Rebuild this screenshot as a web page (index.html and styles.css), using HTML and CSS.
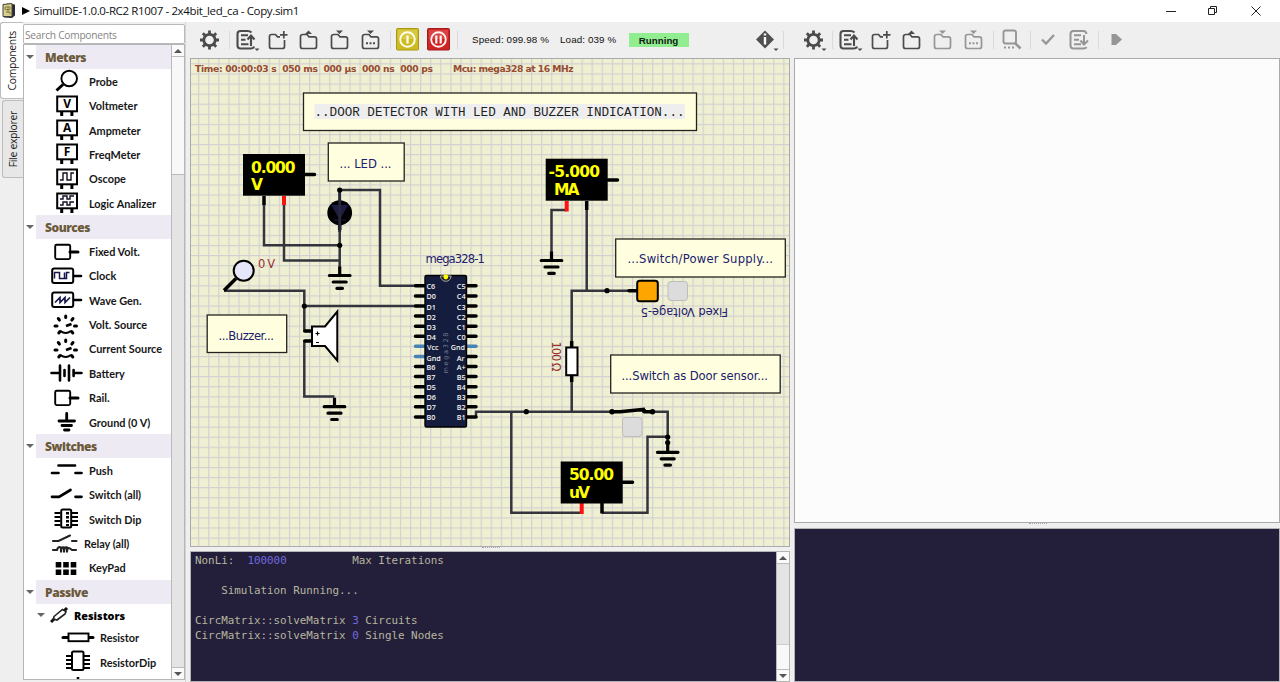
FILE: index.html
```html
<!DOCTYPE html>
<html lang="en">
<head>
<meta charset="utf-8">
<title>SimulIDE</title>
<link rel="stylesheet" href="styles.css">
</head>
<body>
<svg class="defs" width="0" height="0">
  <defs>
    <g id="gear"><circle cx="15.5" cy="18" r="5.7" fill="none" stroke="currentColor" stroke-width="2.8"/><path d="M15.5 8.5v4M15.5 23.5v4M6 18h4M21 18h4M8.8 11.3l2.8 2.8M19.4 21.9l2.8 2.8M8.8 24.7l2.8-2.8M19.4 14.1l2.8-2.8" stroke="currentColor" stroke-width="2.8"/></g>
    <path id="drop" d="M23.5 26.5h5l-2.5 2.6z" fill="currentColor"/>
    <g id="list-up"><path d="M20.5 10.5Q19 9 16.5 9H9.5Q6.5 9 6.5 12V23.500Q6.5 26.5 9.5 26.5H19.5Q22.5 26.5 23 24.5M10 13.200h7M10 17.700h4.500M10 22.200h7.500M20 24V14M16.500 17.500L20 13.500L23.500 17.500" fill="none" stroke="currentColor" stroke-width="2.100"/></g>
    <g id="list-down"><path d="M22.500 12Q22 9 19.500 9H9.500Q6.500 9 6.500 12V23.500Q6.500 26.500 9.500 26.500H19.500Q22 26.500 22.500 25M10 13.200h7M10 17.700h5M10 22.200h7M20 13V22M16.500 18.500L20 22.500L24 18.500" fill="none" stroke="currentColor" stroke-width="2"/></g>
    <path id="folder" d="M10 12.500H14L16 14.800H21.500Q23.500 14.800 23.500 16.800V24.500Q23.500 26.500 21.500 26.500H9.500Q7.500 26.500 7.500 24.500V14.500Q7.500 12.500 10 12.500Z" fill="none" stroke="currentColor" stroke-width="1.700"/>
    <path id="folder-plus" d="M18 14.800H15.500L13.500 12.500H9.500Q7.500 12.500 7.500 14.500V24.500Q7.500 26.500 9.500 26.500H20.500Q22.500 26.500 22.500 24.500V18M21.800 9v7.500M18 12.800h7.500" fill="none" stroke="currentColor" stroke-width="1.700"/>
    <path id="up" d="M12 12L15.500 8.500L19 12Z" fill="currentColor"/>
    <path id="down" d="M12 8.500h7L15.500 12Z" fill="currentColor"/>
    <path id="dots" d="M11 21.200h2M14.500 21.200h2M18 21.200h2" stroke="currentColor" stroke-width="2"/>
    <g id="meter"><rect x="7.200" y="2.500" width="19.800" height="14.800" fill="none" stroke="#000" stroke-width="2"/><path d="M11.700 17v5M21.900 17v5" stroke="#000" stroke-width="3"/></g>
    <g id="source"><rect x="5.200" y="4.800" width="15" height="14.300" rx="1.500" fill="none" stroke="#000" stroke-width="1.900"/><path d="M20 12h8" stroke="#000" stroke-width="3" stroke-linecap="round"/></g>
    <g id="wave-box"><rect x="2.200" y="4.500" width="21" height="14.500" rx="2" fill="none" stroke="#000" stroke-width="2"/><path d="M24 12h7" stroke="#000" stroke-width="2.600" stroke-linecap="round"/></g>
    <g id="dial" stroke="#000" fill="none"><path d="M15.700 3v1.500M8.300 5.500l1.200 1.600M23 5.500l-1.200 1.600M5 13h2M24.500 13h2M8.800 20l1.200-1.500M22.800 20l-1.200-1.500" stroke-width="3" stroke-linecap="round"/><path d="M10.500 18Q15.500 22 21 18" stroke-width="1.900"/><path d="M16 13l5.500-2" stroke-width="2.800"/></g>
    <g id="earth" stroke="#000" stroke-linecap="round" stroke-width="3.200"><path d="M0-9V0" stroke-linecap="butt"/><path d="M-10.300 0H10.300M-6.500 6.500H6.500M-2.800 12.800H2.800"/></g>
  </defs>
</svg>

<header class="titlebar">
  <svg class="app-icon" width="16" height="18" viewBox="0 0 16 18"><path d="M5 1.500l8 1v11l-3 2.500-8-.5z" fill="#29283c"/><path d="M1 2.500l9-1v13H1z" fill="#d8cf91" stroke="#44412e"/><path d="M3 5h5v2.500H3zM4 10h4v2.500M6 4v7" fill="none" stroke="#847d45"/></svg>
  <span class="marker"></span>
  <span class="caption">SimulIDE-1.0.0-RC2 R1007 - 2x4bit_led_ca - Copy.sim1</span>
  <svg class="window-controls" width="110" height="20" viewBox="0 0 110 20" fill="none" stroke="#222"><path d="M8 10.500h10M50.500 7.500h6v6h-6zM52.500 7.500v-2h6v6h-2M93.500 5.500l9 9M102.500 5.500l-9 9"/></svg>
</header>

<div class="workspace">
  <nav class="tabs">
    <div class="tab tab-active"><span>Components</span></div>
    <div class="tab tab-files"><span>File explorer</span></div>
  </nav>

  <aside class="sidebar">
    <div class="search">Search Components</div>
    <div class="tree-frame">
      <div class="tree">
        <div class="group"><i class="arrow"></i><b>Meters</b></div>
        <div class="item"><svg class="ico" viewBox="0 0 34 24"><circle cx="19.200" cy="9.500" r="7.800" fill="none" stroke="#000" stroke-width="1.900"/><path d="M13 15.500L6.500 21.500" stroke="#000" stroke-width="3"/></svg>Probe</div>
        <div class="item"><svg class="ico" viewBox="0 0 34 24"><use href="#meter"/><text x="17.100" y="14" class="meter-letter">V</text></svg>Voltmeter</div>
        <div class="item"><svg class="ico" viewBox="0 0 34 24"><use href="#meter"/><text x="17.100" y="14" class="meter-letter">A</text></svg>Ampmeter</div>
        <div class="item"><svg class="ico" viewBox="0 0 34 24"><use href="#meter"/><text x="17.100" y="14" class="meter-letter">F</text></svg>FreqMeter</div>
        <div class="item"><svg class="ico" viewBox="0 0 34 24"><use href="#meter"/><path d="M10 13h3V6h4v7h4V6h3" fill="none" stroke="#112" stroke-width="1.400"/></svg>Oscope</div>
        <div class="item"><svg class="ico" viewBox="0 0 34 24"><use href="#meter"/><path d="M10 8h3V5h4v3h3V5h4M10 14h3v-3h4v3h3v-3h4" fill="none" stroke="#112" stroke-width="1.400"/></svg>Logic Analizer</div>

        <div class="group"><i class="arrow"></i><b>Sources</b></div>
        <div class="item"><svg class="ico" viewBox="0 0 34 24"><use href="#source"/></svg>Fixed Volt.</div>
        <div class="item"><svg class="ico" viewBox="0 0 34 24"><use href="#wave-box"/><path d="M4.500 14.500V8.500h5v6h5v-6M12.500 14.500h4v-6h3" fill="none" stroke="#16164a" stroke-width="1.500"/></svg>Clock</div>
        <div class="item"><svg class="ico" viewBox="0 0 34 24"><use href="#wave-box"/><path d="M5 14.500l5-5v5l5-5v5l5-5" fill="none" stroke="#16164a" stroke-width="1.600"/></svg>Wave Gen.</div>
        <div class="item"><svg class="ico" viewBox="0 0 34 24"><use href="#dial"/></svg>Volt. Source</div>
        <div class="item"><svg class="ico" viewBox="0 0 34 24"><use href="#dial"/></svg>Current Source</div>
        <div class="item"><svg class="ico" viewBox="0 0 34 24"><path d="M1.500 12H9M24.500 12h7M10 4.500v15M14.500 9v6M19 4.500v15M23.600 9v6" fill="none" stroke="#000" stroke-width="2.600" stroke-linecap="round"/></svg>Battery</div>
        <div class="item"><svg class="ico" viewBox="0 0 34 24"><use href="#source"/></svg>Rail.</div>
        <div class="item"><svg class="ico" viewBox="0 0 34 24"><path d="M16.700 3.500v7M9 11h15.500M12 15.500h9.500M14.500 20h4.500" stroke="#000" stroke-width="2.800" stroke-linecap="round"/></svg>Ground (0 V)</div>

        <div class="group"><i class="arrow"></i><b>Switches</b></div>
        <div class="item"><svg class="ico" viewBox="0 0 34 24"><path d="M8.500 6.500h16.500M2 14h6.500M25.500 14h6" stroke="#000" stroke-width="2.700" stroke-linecap="round"/></svg>Push</div>
        <div class="item"><svg class="ico" viewBox="0 0 34 24"><path d="M2 13.800h7L20.500 7M25.500 13.800h6" fill="none" stroke="#000" stroke-width="2.700" stroke-linecap="round"/></svg>Switch (all)</div>
        <div class="item"><svg class="ico" viewBox="0 0 34 24"><path d="M4.500 6h6M4.500 10h6M4.500 14h6M4.500 18h6M22 6h6M22 10h6M22 14h6M22 18h6" stroke="#000" stroke-width="2"/><rect x="11.200" y="2.500" width="10" height="18" rx="1.500" fill="#fff" stroke="#000" stroke-width="2"/><path d="M17.500 5v14" stroke="#000" stroke-width="3" stroke-dasharray="2.500 1.500"/></svg>Switch Dip</div>
        <div class="item item-relay"><svg class="ico" viewBox="0 0 34 24"><path d="M3 9h5.500L20 3.500M22 9h4.500M3 18h4q1-4 4-2.500v5q0-6 3-5v5q0-6 3-5v5q0-6 3-4l2 1.500h4" fill="none" stroke="#222" stroke-width="2.100" stroke-linecap="round"/></svg>Relay (all)</div>
        <div class="item"><svg class="ico" viewBox="0 0 34 24"><path d="M5.700 6h5.600v5.600H5.700zM13.200 6h5.600v5.600h-5.600zM20.700 6h5.600v5.600h-5.600zM5.700 13.400h5.600V19H5.700zM13.200 13.400h5.600V19h-5.600zM20.700 13.400h5.600V19h-5.600z"/></svg>KeyPad</div>

        <div class="group"><i class="arrow"></i><b>Passive</b></div>
        <div class="subgroup"><i class="arrow"></i><svg width="19" height="16" viewBox="0 0 19 16"><path d="M1 15l4-4M14 4l3-3" stroke="#111" stroke-width="3"/><path d="M4 9.500L12.500 2.500L16 4.500L15 7L7 13L3.500 12Z" fill="#fff" stroke="#222" stroke-width="1.600"/></svg><b>Resistors</b></div>
        <div class="item item-nested"><svg class="ico" viewBox="0 0 34 24"><path d="M2 11.500h30" stroke="#000" stroke-width="3" stroke-linecap="round"/><rect x="7.500" y="7.500" width="20" height="7.700" fill="#fff" stroke="#000" stroke-width="1.900"/></svg>Resistor</div>
        <div class="item item-nested"><svg class="ico" viewBox="0 0 34 24"><path d="M5 6h24M5 10h24M5 14h24M5 18h24" stroke="#000" stroke-width="2"/><rect x="11" y="1.500" width="11.500" height="18.500" rx="1.500" fill="#fff" stroke="#000" stroke-width="2"/></svg>ResistorDip</div>
        <div class="item item-nested"><svg class="ico" viewBox="0 0 34 24"><path d="M17 2v8" stroke="#000" stroke-width="2.500"/></svg></div>
      </div>
      <div class="scrollbar"><i class="btn"><i class="tri-up"></i></i><i class="thumb tree-thumb"></i><i class="groove"></i><i class="btn"><i class="tri-down"></i></i></div>
    </div>
  </aside>
  <div class="vsplit"></div>

  <main class="simulator">
    <div class="toolbar">
      <svg class="tool" viewBox="0 0 31 36"><use href="#gear"/></svg>
      <i class="sep sep-a"></i>
      <svg class="tool" viewBox="0 0 31 36"><use href="#list-up"/><use href="#drop"/></svg>
      <svg class="tool" viewBox="0 0 31 36"><use href="#folder-plus"/></svg>
      <svg class="tool" viewBox="0 0 31 36"><use href="#folder"/><use href="#up"/></svg>
      <svg class="tool" viewBox="0 0 31 36"><use href="#folder"/><use href="#down"/></svg>
      <svg class="tool" viewBox="0 0 31 36"><use href="#folder"/><use href="#down"/><use href="#dots"/></svg>
      <i class="sep sep-a"></i>
      <svg class="tool" viewBox="0 0 31 36"><rect x="4.500" y="6.500" width="22" height="21.500" rx="1" fill="#cdbb24" stroke="#aa9914"/><rect x="6" y="8" width="19" height="9" fill="#e0d25a" opacity=".6"/><circle cx="15.500" cy="17.500" r="7.300" fill="none" stroke="#fffef0" stroke-width="1.900"/><path d="M15.500 13.500v8" stroke="#fffef0" stroke-width="2.200"/></svg>
      <svg class="tool" viewBox="0 0 31 36"><rect x="4.500" y="6.500" width="22" height="21.500" rx="1" fill="#cf2424" stroke="#a31d1d"/><rect x="6" y="8" width="19" height="9" fill="#e86060" opacity=".5"/><circle cx="15.500" cy="17.500" r="7.300" fill="none" stroke="#fff4f4" stroke-width="1.900"/><path d="M13.300 13.500v8M17.700 13.500v8" stroke="#fff4f4" stroke-width="2.200"/></svg>
      <i class="sep sep-b"></i>
      <span class="stat stat-speed">Speed: 099.98 %</span>
      <span class="stat stat-load">Load: 039 %</span>
      <span class="running">Running</span>
      <svg class="tool info" viewBox="0 0 31 36"><path d="M15 8.500l9 9-9 9-9-9z" fill="#505050"/><path d="M15 15v7.500M15 11.500v2" stroke="#fff" stroke-width="2.400"/><use href="#drop"/></svg>
      <i class="sep"></i>
    </div>

    <div class="canvas">
      <svg width="598" height="487" viewBox="191 59 598 487">
        <defs>
          <pattern id="grid" patternUnits="userSpaceOnUse" x="198.100" y="83.500" width="10.090" height="10.090"><path d="M0 .5H10.090M.5 0V10.090" stroke="#d2d0d1" stroke-width="1.300"/></pattern>
        </defs>
        <rect x="191" y="59" width="598" height="487" fill="#efefd1"/>
        <rect x="191" y="59" width="598" height="487" fill="url(#grid)"/>

        <g class="status">
          <text x="195" y="72" textLength="238" xml:space="preserve">Time: 00:00:03 s  050 ms  000 µs  000 ns  000 ps</text>
          <text x="453" y="72" textLength="120.500">Mcu: mega328 at 16 MHz</text>
        </g>

        <g class="note">
          <rect x="303.500" y="93" width="393" height="37.500"/>
          <rect x="328.300" y="143" width="75.900" height="38"/>
          <rect x="207.200" y="315" width="79.500" height="37.500"/>
          <rect x="615.700" y="239" width="169.600" height="38"/>
          <rect x="610.700" y="355" width="169.500" height="38"/>
        </g>
        <rect x="314.500" y="104" width="370.500" height="15" fill="#eee"/>
        <text class="headline" x="314.500" y="115.500" textLength="370">..DOOR DETECTOR WITH LED AND BUZZER INDICATION...</text>
        <g class="label">
          <text x="339.500" y="167.700" textLength="52">... LED ...</text>
          <text x="218.500" y="339.500" textLength="55.500">...Buzzer...</text>
          <text x="627.500" y="263.300" textLength="145.500">...Switch/Power Supply...</text>
          <text x="621.500" y="379.500" textLength="146.500">...Switch as Door sensor...</text>
          <text x="425.500" y="263.300" textLength="59.500">mega328-1</text>
          <text transform="translate(728 307.500) rotate(180)" textLength="87.500">Fixed Voltage-5</text>
        </g>

        <g class="wire">
          <path d="M264 203V245.300H339.700M284 203V260.500H339.700M339.700 190V268M339.700 190H380V285.800H418"/>
          <path d="M224 290.700H304.300V331H308M304.300 306H418M308 341H304.300V396.500H334.500"/>
          <path d="M566.700 210H551.500V252M586.700 205V290.700M630 290.700H571.700V411.700M476 418V411.700H614M650 411.700H667.700V441M667.700 436.700H647.500V512.700H602M511.300 411.700V512.700H581.700"/>
        </g>

        <g class="pin">
          <path d="M264 196V205M339.700 220V230M586.700 201V210M602 503V513.500M571.700 341V347M571.700 375V382"/>
          <path stroke-linecap="round" d="M305 174.500H314.500M608 180H617.500M623 482.300H632.500M305 331H311M305 341H311M629 290.700H637"/>
        </g>
        <path d="M284 196V205M566.700 201V211.500M581.700 503V514" stroke="#f11" stroke-width="4"/>

        <g class="display-box">
          <rect x="243" y="154" width="62" height="41.700"/>
          <rect x="545.700" y="158.700" width="62" height="42"/>
          <rect x="560.700" y="461.500" width="62" height="42"/>
        </g>
        <g class="display">
          <text x="251" y="172.500" textLength="44.500">0.000</text><text x="251" y="190.300">V</text>
          <text x="548.500" y="177" textLength="51.500">-5.000</text><text x="554" y="195" textLength="25.500">MA</text>
          <text x="569" y="479.800" textLength="45">50.00</text><text x="569" y="497.500" textLength="21">uV</text>
        </g>

        <circle cx="339.700" cy="212.700" r="12.400"/>
        <path d="M332 205.500H347.400L339.700 219ZM334 220H346" fill="#1c1c46" stroke="#1c1c46"/>
        <path d="M339.700 190V232" stroke="#272738" stroke-width="2.800"/>

        <circle cx="243.700" cy="270.700" r="10" fill="#e6e6fa" stroke="#000" stroke-width="2"/>
        <path d="M236 278.500L224 290.500" stroke="#000" stroke-width="3.500"/>

        <path d="M312 326.500H325L337.300 311.500V360.500L325 346H312Z" fill="#fff" stroke="#000" stroke-width="2"/>
        <path d="M315.500 333.500h4M317.500 331.500v4M316 342.500h3" stroke="#000" stroke-width="1.200"/>

        <use href="#earth" x="339.700" y="275.500"/>
        <use href="#earth" x="334.500" y="406.700"/>
        <use href="#earth" x="551.500" y="260.500"/>
        <use href="#earth" x="667.700" y="452.300"/>

        <path class="legs" d="M415.500 285.800h9M415.500 295.900h9M415.500 306h9M415.500 316.100h9M415.500 326.200h9M415.500 336.200h9M415.500 366.500h9M415.500 376.600h9M415.500 386.700h9M415.500 396.800h9M415.500 406.800h9M415.500 416.900h9M467 285.800h9M467 295.900h9M467 306h9M467 316.100h9M467 326.200h9M467 336.200h9M467 356.400h9M467 366.500h9M467 376.600h9M467 386.700h9M467 396.800h9M467 406.800h9M467 416.900h9"/>
        <path class="legs legs-power" d="M415.500 346.300h9M415.500 356.400h9M467 346.300h9"/>
        <rect x="425" y="275.500" width="41.500" height="151.500" rx="1.500" fill="#151d3f" stroke="#000" stroke-width="1.400"/>
        <path d="M440.500 276a5.300 5.300 0 0 0 10.600 0z" fill="#222" stroke="#aaa" stroke-width="1"/>
        <circle cx="445.800" cy="277" r="2.400" fill="#ff0"/>
        <g class="chip-text">
          <text x="426.500" y="289.300">C6</text><text x="426.500" y="299.400">D0</text><text x="426.500" y="309.500">D1</text><text x="426.500" y="319.500">D2</text><text x="426.500" y="329.600">D3</text><text x="426.500" y="339.700">D4</text><text x="427" y="350.300">Vcc</text><text x="426.500" y="360.600">Gnd</text><text x="426.500" y="370">B6</text><text x="426.500" y="380.100">B7</text><text x="426.500" y="390.200">D5</text><text x="426.500" y="400.300">D6</text><text x="426.500" y="410.300">D7</text><text x="426.500" y="420.400">B0</text>
        </g>
        <g class="chip-text chip-right">
          <text x="465.500" y="289.300">C5</text><text x="465.500" y="299.400">C4</text><text x="465.500" y="309.500">C3</text><text x="465.500" y="319.500">C2</text><text x="465.500" y="329.600">C1</text><text x="465.500" y="339.700">C0</text><text x="465" y="350.300">Gnd</text><text x="464.500" y="360.600">Ar</text><text x="465.500" y="370">A+</text><text x="465.500" y="380.100">B5</text><text x="465.500" y="390.200">B4</text><text x="465.500" y="400.300">B3</text><text x="465.500" y="410.300">B2</text><text x="465.500" y="420.400">B1</text>
        </g>
        <text class="chip-name" transform="translate(448 373.500) rotate(-90)" textLength="41">mega328</text>

        <rect x="566.200" y="347.500" width="11.300" height="27.700" fill="#fff" stroke="#000" stroke-width="2"/>
        <g class="value">
          <text x="258" y="268" textLength="17">0 V</text>
          <text transform="translate(552 341.500) rotate(90)" textLength="30">100 Ω</text>
        </g>

        <rect x="637.200" y="280.800" width="20.600" height="20.400" rx="2.500" fill="#ffa500" stroke="#000" stroke-width="2"/>
        <g fill="#dcdcdc" stroke="#bdbdbd"><rect x="668" y="281.500" width="19.500" height="19" rx="3"/><rect x="622.500" y="417.500" width="19.500" height="19" rx="3"/></g>
        <path d="M612 411.700H620L645 409.200M644 409V411.700H652" fill="none" stroke="#000" stroke-width="3.600" stroke-linejoin="round"/>
        <g><circle cx="339.700" cy="190" r="2.600"/><circle cx="339.700" cy="245.300" r="2.600"/><circle cx="304.300" cy="306" r="2.600"/><circle cx="607" cy="290.700" r="2.600"/><circle cx="526.300" cy="411.700" r="2.600"/><circle cx="612" cy="411.700" r="2.700"/><circle cx="652.500" cy="411.700" r="2.700"/><circle cx="667.700" cy="437" r="2.600"/><circle cx="667.700" cy="442.500" r="2.600"/></g>
      </svg>
    </div>
    <div class="hsplit"></div>
    <div class="console">
      <div class="log">
        <div class="line"><span>NonLi:  </span><em>100000</em><span>          Max Iterations</span></div>
        <div class="line"></div>
        <div class="line"><span>    Simulation Running...</span></div>
        <div class="line"></div>
        <div class="line"><span>CircMatrix::solveMatrix </span><em>3</em><span> Circuits</span></div>
        <div class="line"><span>CircMatrix::solveMatrix </span><em>0</em><span> Single Nodes</span></div>
      </div>
      <div class="scrollbar"><i class="btn"><i class="tri-up"></i></i><i class="groove"></i><i class="thumb console-thumb"></i><i class="btn"><i class="tri-down"></i></i></div>
    </div>
  </main>

  <section class="editor">
    <div class="toolbar">
      <svg class="tool" viewBox="0 0 31 36"><use href="#gear"/><use href="#drop"/></svg>
      <i class="sep sep-b"></i>
      <svg class="tool" viewBox="0 0 31 36"><use href="#list-up"/><use href="#drop"/></svg>
      <svg class="tool" viewBox="0 0 31 36"><use href="#folder-plus"/></svg>
      <svg class="tool" viewBox="0 0 31 36"><use href="#folder"/><use href="#up"/></svg>
      <svg class="tool disabled" viewBox="0 0 31 36"><use href="#folder"/><use href="#down"/></svg>
      <svg class="tool disabled" viewBox="0 0 31 36"><use href="#folder"/><use href="#down"/><use href="#dots"/></svg>
      <i class="sep sep-c"></i>
      <svg class="tool disabled" viewBox="0 0 31 36"><rect x="7.500" y="8.500" width="12.500" height="13" rx="2" fill="none" stroke="currentColor" stroke-width="1.900"/><path d="M18.500 20.500l6 6" stroke="currentColor" stroke-width="2.600"/><path d="M8 25.500h2M12 25.500h2M16 25.500h2" stroke="currentColor" stroke-width="2"/></svg>
      <i class="sep sep-b"></i>
      <svg class="tool disabled" viewBox="0 0 31 36"><path d="M10 17.500l4 4 8-8.500" fill="none" stroke="currentColor" stroke-width="2.300"/></svg>
      <svg class="tool disabled" viewBox="0 0 31 36"><use href="#list-down" x="1"/></svg>
      <i class="sep sep-a"></i>
      <svg class="tool disabled" viewBox="0 0 31 36"><path d="M11.500 12h4.500l6 5.500-6 5.500h-4.500z" fill="currentColor"/></svg>
    </div>
    <div class="document"></div>
    <div class="hsplit hsplit-right"></div>
    <div class="output"></div>
  </section>
</div>
</body>
</html>
```
FILE: styles.css
```css
* { box-sizing: border-box; }
body { margin: 0; width: 1280px; height: 682px; overflow: hidden; background: #efefef; font-family: "Open Sans", sans-serif; display: flex; flex-direction: column; }
.defs { position: absolute; }
svg { display: block; flex: none; }

.titlebar { height: 22px; flex: none; background: #fff; display: flex; align-items: center; padding: 0 0 1px 2px; }
.marker { margin-left: 4px; border-left: 8px solid #000; border-top: 4px solid transparent; border-bottom: 4px solid transparent; }
.caption { margin-left: 3.500px; font-size: 11.500px; letter-spacing: -.37px; color: #111; white-space: pre; }
.window-controls { margin-left: auto; margin-right: 12px; }

.workspace { flex: 1; min-height: 0; display: flex; }
.tabs { width: 23px; flex: none; display: flex; flex-direction: column; }
.tab { display: flex; align-items: center; justify-content: center; border: 1px solid #bdbdbd; border-right: 0; border-radius: 3px 0 0 3px; }
.tab span { writing-mode: vertical-rl; transform: rotate(180deg); font-size: 10.400px; line-height: 16px; letter-spacing: -.28px; color: #1b1b1b; white-space: nowrap; }
.tab-active { height: 77px; background: #fff; }
.tab-files { height: 78px; margin: 1px 0 0 2px; background: #e7e7e7; }

.sidebar { width: 162px; flex: none; display: flex; flex-direction: column; padding-bottom: 2px; }
.search { height: 20px; margin: 2px 0 0; flex: none; background: #fff; border: 1px solid #b9b9b9; border-radius: 2px; padding-left: 1px; font-size: 10.200px; line-height: 20px; letter-spacing: -.25px; color: #858585; }
.tree-frame { flex: 1; min-height: 0; display: flex; background: #fff; border: 1px solid #b5b5b5; }
.tree { flex: 1; overflow: hidden; font: 700 10.900px Lato, sans-serif; color: #171717; }
.group { height: 24.200px; display: flex; align-items: center; color: #6b5a3a; font: 700 12px "Noto Sans", sans-serif; letter-spacing: -.45px; }
.group b { flex: 1; margin-left: 2px; height: 100%; line-height: 25px; padding-left: 9px; background: #eeeaf4; }
.arrow { margin-left: 2px; border-top: 4px solid #666; border-left: 4px solid transparent; border-right: 4px solid transparent; flex: none; }
.item { height: 24.350px; display: flex; align-items: center; gap: 5px; padding-left: 26px; white-space: nowrap; }
.item-relay { gap: 0; }
.item-nested { padding-left: 37px; }
.ico { width: 34px; height: 24px; }
.meter-letter { font: 700 12px "Open Sans", sans-serif; text-anchor: middle; }
.subgroup { height: 21.500px; display: flex; align-items: center; font: 700 10.800px "Open Sans", sans-serif; color: #000; }
.subgroup .arrow { margin-left: 13px; margin-right: 5px; }
.subgroup b { margin-left: 5px; }

.scrollbar { width: 13px; flex: none; display: flex; flex-direction: column; border-left: 1px solid #b9b9b9; background: #e4e4e4; }
.btn { height: 12px; flex: none; background: #fafafa; display: flex; align-items: center; justify-content: center; border-bottom: 1px solid #bbb; }
.btn:last-child { border-bottom: 0; border-top: 1px solid #bbb; }
.tri-up { border-bottom: 4px solid #555; border-left: 4px solid transparent; border-right: 4px solid transparent; }
.tri-down { border-top: 4px solid #555; border-left: 4px solid transparent; border-right: 4px solid transparent; }
.thumb { flex: none; background: #f8f8f8; }
.tree-thumb { height: 118px; border-bottom: 1px solid #bbb; }
.console-thumb { height: 25px; border-top: 1px solid #ccc; }
.groove { flex: 1; }
.vsplit { width: 5px; flex: none; border-left: 1px solid #d4d4d4; }

.simulator { width: 600px; flex: none; display: flex; flex-direction: column; }
.toolbar { height: 36px; flex: none; display: flex; align-items: center; padding-left: 3.500px; color: #4b4b4b; }
.tool { width: 31px; height: 36px; }
.disabled { color: #969696; }
.sep { width: 1px; height: 18px; background: #dadada; flex: none; }
.sep-a { margin: 0 1px 0 4px; }
.sep-b { margin: 0 1px 0 3px; }
.sep-c { margin: 0 2.500px 0 4px; }
.stat { font: 9.800px "Liberation Sans", sans-serif; color: #111; white-space: nowrap; flex: none; margin-top: -1px; }
.stat-speed { width: 88px; margin-left: 13.500px; letter-spacing: .12px; }
.stat-load { width: 68.500px; letter-spacing: .12px; }
.running { width: 60px; height: 14px; background: #90ee90; text-align: center; font: 700 9.800px/15px "Liberation Sans", sans-serif; color: #132013; }
.info { margin-left: 61px; margin-right: 2px; }
.canvas { height: 489px; flex: none; border: 1px solid #aaa; }
.status { font: 700 9.200px "DejaVu Sans", sans-serif; fill: #964b32; }
.note rect { fill: #ffffdf; stroke: #222; stroke-width: 1.300; }
.headline { font: 12.600px "Liberation Mono", monospace; fill: #222; }
.label { font: 11.600px "DejaVu Sans", sans-serif; fill: #20206e; }
.value { font: 11.500px "DejaVu Sans", sans-serif; fill: #963232; }
.wire { fill: none; stroke: #34343f; stroke-width: 2.500; }
.pin { fill: none; stroke: #000; stroke-width: 3.500; }
.display { font: 700 15.500px "DejaVu Sans", sans-serif; fill: #ff0; }
.legs { stroke: #000; stroke-width: 3.500; stroke-linecap: round; }
.legs-power { stroke: #4682b4; }
.chip-text { font: 600 7.200px "Open Sans", sans-serif; fill: #f4f4ec; }
.chip-right { text-anchor: end; }
.chip-name { font: 6.500px "DejaVu Sans", sans-serif; fill: #767b90; }

.hsplit { height: 4px; flex: none; width: 18px; margin-left: 292px; border-top: 1px dotted #aaa; }
.console { height: 131px; flex: none; display: flex; background: #231f3a; border: 1px solid #b4b4b4; }
.log { flex: 1; padding: 1px 0 0 4px; font: 10.880px/15px "DejaVu Sans Mono", monospace; color: #b7b59e; }
.line { height: 15px; display: flex; white-space: pre; }
.console em { font-style: normal; color: #7068df; }

.editor { flex: 1; margin-left: 4px; display: flex; flex-direction: column; }
.document { height: 465px; flex: none; background: #fcfcfc; border: 1px solid #aaa; }
.hsplit-right { height: 5px; margin: 0 0 0 235px; border-top-style: dotted; }
.output { height: 154px; flex: none; background: #231f3a; border: 1px solid #b4b4b4; }
```
